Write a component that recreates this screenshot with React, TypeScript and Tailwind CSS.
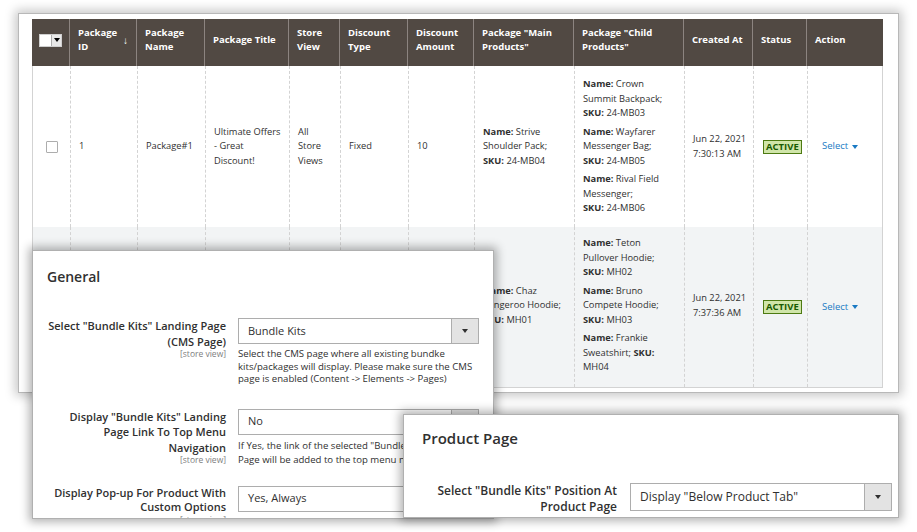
import React from "react";

const cols =
  "grid grid-cols-[38px_67px_68px_84px_51px_68px_66px_100px_110px_69px_54px_76px]";

function HCell({ children, last }: { children?: React.ReactNode; last?: boolean }) {
  return (
    <div
      className={`flex items-center px-[8px] pb-[6px] text-[9.5px] font-bold leading-[14px] text-white ${
        last ? "" : "border-r border-[#8c8480]"
      }`}
    >
      {children}
    </div>
  );
}

function BCell({
  children,
  last,
  extra = "",
}: {
  children?: React.ReactNode;
  last?: boolean;
  extra?: string;
}) {
  return (
    <div
      className={`flex items-center whitespace-nowrap px-[8px] text-[9.3px] leading-[14.5px] text-[#303030] ${
        last ? "" : "border-r border-dashed border-[#d3d3d3]"
      } ${extra}`}
    >
      {children}
    </div>
  );
}

function Tri({ color = "#303030" }: { color?: string }) {
  return (
    <span
      className="inline-block h-0 w-0 border-x-[3px] border-t-[4px] border-x-transparent"
      style={{ borderTopColor: color }}
    />
  );
}

function Badge() {
  return (
    <span className="border border-[#4d7a12] bg-[#d0e5a9] px-[2px] text-[9.5px] font-bold leading-[12px] text-[#185b00]">
      ACTIVE
    </span>
  );
}

function SelectLink() {
  return (
    <span className="flex items-center gap-[4px] text-[9.5px] text-[#1979c3]">
      Select
      <Tri color="#1979c3" />
    </span>
  );
}

function Group({ children }: { children: React.ReactNode }) {
  return <div>{children}</div>;
}

function Sel({
  value,
  h,
  fs,
}: {
  value: string;
  h: string;
  fs: string;
}) {
  return (
    <div className={`flex w-full border border-[#adadad] bg-white ${h}`}>
      <div className={`flex flex-1 items-center pl-[9px] text-[#303030] ${fs}`}>{value}</div>
      <div className="flex w-[27px] items-center justify-center border-l border-[#adadad] bg-[#e3e3e3]">
        <Tri />
      </div>
    </div>
  );
}

export default function App() {
  return (
    <div className="relative h-[532px] w-[917px] overflow-hidden bg-white pl-[19px] pt-[14px] font-['Open_Sans','Liberation_Sans',sans-serif]">
      {/* Grid card */}
      <div className="h-[378px] w-[879px] bg-white pl-[13px] pt-[5px] shadow-[0_0_0_1px_#b8b8b8,0_0_10px_4px_rgba(0,0,0,0.22)]">
        <div className="w-[851px]">
          {/* header */}
          <div className={`${cols} h-[47px] bg-[#514943]`}>
            <div className="flex items-center border-r border-[#8c8480] pb-[5px] pl-[7px]">
              <div className="flex h-[13px] border border-[#cfcfcf] bg-white">
                <div className="w-[11px] bg-white" />
                <div className="flex w-[10px] items-center justify-center border-l border-[#adadad] bg-[#e8e8e8]">
                  <Tri color="#000" />
                </div>
              </div>
            </div>
            <HCell>
              <div className="flex w-full items-center justify-between">
                <span>
                  Package
                  <br />
                  ID
                </span>
                <span className="text-[10px]">↓</span>
              </div>
            </HCell>
            <HCell>
              <span>
                Package
                <br />
                Name
              </span>
            </HCell>
            <HCell>Package Title</HCell>
            <HCell>
              <span>
                Store
                <br />
                View
              </span>
            </HCell>
            <HCell>
              <span>
                Discount
                <br />
                Type
              </span>
            </HCell>
            <HCell>
              <span>
                Discount
                <br />
                Amount
              </span>
            </HCell>
            <HCell>
              <span>
                Package "Main
                <br />
                Products"
              </span>
            </HCell>
            <HCell>
              <span>
                Package "Child
                <br />
                Products"
              </span>
            </HCell>
            <HCell>Created At</HCell>
            <HCell>Status</HCell>
            <HCell last>Action</HCell>
          </div>

          <div className="border-x border-b border-[#d3d3d3]">
            {/* row 1 */}
            <div className={`${cols} h-[161px] bg-white`}>
              <BCell extra="justify-center px-0">
                <span className="h-[12px] w-[12px] rounded-[1px] border border-[#adadad] bg-white" />
              </BCell>
              <BCell>1</BCell>
              <BCell>Package#1</BCell>
              <BCell>
                <span>
                  Ultimate Offers
                  <br />- Great
                  <br />
                  Discount!
                </span>
              </BCell>
              <BCell>
                <span>
                  All
                  <br />
                  Store
                  <br />
                  Views
                </span>
              </BCell>
              <BCell>Fixed</BCell>
              <BCell>10</BCell>
              <BCell>
                <span>
                  <b className="font-bold">Name:</b> Strive
                  <br />
                  Shoulder Pack;
                  <br />
                  <b className="font-bold">SKU:</b> 24-MB04
                </span>
              </BCell>
              <BCell>
                <div className="flex flex-col gap-[4px]">
                  <Group>
                    <b className="font-bold">Name:</b> Crown
                    <br />
                    Summit Backpack;
                    <br />
                    <b className="font-bold">SKU:</b> 24-MB03
                  </Group>
                  <Group>
                    <b className="font-bold">Name:</b> Wayfarer
                    <br />
                    Messenger Bag;
                    <br />
                    <b className="font-bold">SKU:</b> 24-MB05
                  </Group>
                  <Group>
                    <b className="font-bold">Name:</b> Rival Field
                    <br />
                    Messenger;
                    <br />
                    <b className="font-bold">SKU:</b> 24-MB06
                  </Group>
                </div>
              </BCell>
              <BCell>
                <span>
                  Jun 22, 2021
                  <br />
                  7:30:13 AM
                </span>
              </BCell>
              <BCell extra="pl-[9px]">
                <Badge />
              </BCell>
              <BCell last extra="pl-[14px]">
                <SelectLink />
              </BCell>
            </div>

            {/* row 2 */}
            <div className={`${cols} h-[160px] bg-[#f2f4f5]`}>
              <BCell extra="justify-center px-0">
                <span className="h-[12px] w-[12px] rounded-[1px] border border-[#adadad] bg-white" />
              </BCell>
              <BCell />
              <BCell />
              <BCell />
              <BCell />
              <BCell />
              <BCell />
              <BCell>
                <span className="-mt-[3px]">
                  <b className="font-bold">Name:</b> Chaz
                  <br />
                  Kangeroo Hoodie;
                  <br />
                  <b className="font-bold">SKU:</b> MH01
                </span>
              </BCell>
              <BCell>
                <div className="-mt-[3px] flex flex-col gap-[4px]">
                  <Group>
                    <b className="font-bold">Name:</b> Teton
                    <br />
                    Pullover Hoodie;
                    <br />
                    <b className="font-bold">SKU:</b> MH02
                  </Group>
                  <Group>
                    <b className="font-bold">Name:</b> Bruno
                    <br />
                    Compete Hoodie;
                    <br />
                    <b className="font-bold">SKU:</b> MH03
                  </Group>
                  <Group>
                    <b className="font-bold">Name:</b> Frankie
                    <br />
                    Sweatshirt; <b className="font-bold">SKU:</b>
                    <br />
                    MH04
                  </Group>
                </div>
              </BCell>
              <BCell>
                <span className="-mt-[3px]">
                  Jun 22, 2021
                  <br />
                  7:37:36 AM
                </span>
              </BCell>
              <BCell extra="pl-[9px]">
                <Badge />
              </BCell>
              <BCell last extra="pl-[14px]">
                <SelectLink />
              </BCell>
            </div>
          </div>
        </div>
      </div>

      {/* General panel */}
      <div className="absolute left-[33px] top-[251px] h-[267px] w-[460px] overflow-hidden bg-white pl-[14px] pt-[16px] shadow-[0_0_0_1px_#b0b0b0,0_0_9px_4px_rgba(0,0,0,0.3)]">
        <div className="text-[14px] font-semibold leading-[20px] text-[#303030]">General</div>

        <div className="mt-[31px] flex items-start gap-[12px]">
          <div className="w-[179px] whitespace-nowrap text-right">
            <div className="text-[11px] font-semibold leading-[15.5px] text-[#303030]">
              Select "Bundle Kits" Landing Page
              <br />
              (CMS Page)
            </div>
            <div className="text-[8.5px] leading-[9px] text-[#808080]">[store view]</div>
          </div>
          <div className="w-[241px]">
            <Sel value="Bundle Kits" h="h-[26px]" fs="text-[11px]" />
            <div className="mt-[4px] whitespace-nowrap text-[9.6px] leading-[12.5px] text-[#303030]">
              Select the CMS page where all existing bundke
              <br />
              kits/packages will display. Please make sure the CMS
              <br />
              page is enabled (Content -&gt; Elements -&gt; Pages)
            </div>
          </div>
        </div>

        <div className="mt-[23px] flex items-start gap-[12px]">
          <div className="w-[179px] whitespace-nowrap text-right">
            <div className="text-[11px] font-semibold leading-[15.5px] text-[#303030]">
              Display "Bundle Kits" Landing
              <br />
              Page Link To Top Menu
              <br />
              Navigation
            </div>
            <div className="text-[8.5px] leading-[9px] text-[#808080]">[store view]</div>
          </div>
          <div className="w-[241px]">
            <Sel value="No" h="h-[26px]" fs="text-[11px]" />
            <div className="mt-[4px] whitespace-nowrap text-[9.6px] leading-[14px] text-[#303030]">
              If Yes, the link of the selected "Bundle Kits" Landing
              <br />
              Page will be added to the top menu navigation.
            </div>
          </div>
        </div>

        <div className="mt-[19px] flex items-start gap-[12px]">
          <div className="w-[179px] whitespace-nowrap text-right">
            <div className="text-[11px] font-semibold leading-[14.5px] text-[#303030]">
              Display Pop-up For Product With
              <br />
              Custom Options
            </div>
            <div className="text-[8.5px] leading-[9px] text-[#808080]">[store view]</div>
          </div>
          <div className="w-[241px]">
            <Sel value="Yes, Always" h="h-[26px]" fs="text-[11px]" />
            <div className="mt-[4px] whitespace-nowrap text-[9.6px] leading-[12.5px] text-[#303030]">
              Choose when the popup will display for products
            </div>
          </div>
        </div>
      </div>

      {/* Product Page panel */}
      <div className="absolute left-[404px] top-[415px] h-[102px] w-[494px] overflow-hidden bg-white pl-[18px] pt-[13px] shadow-[0_0_0_1px_#b0b0b0,0_0_9px_4px_rgba(0,0,0,0.3)]">
        <div className="text-[15px] font-semibold leading-[20px] text-[#303030]">Product Page</div>
        <div className="mt-[35px] flex items-start gap-[13px]">
          <div className="w-[195px] whitespace-nowrap text-right text-[12px] font-semibold leading-[16px] text-[#303030]">
            Select "Bundle Kits" Position At
            <br />
            Product Page
          </div>
          <div className="w-[262px]">
            <Sel value={'Display "Below Product Tab"'} h="h-[28px]" fs="text-[12px]" />
          </div>
        </div>
      </div>
    </div>
  );
}
